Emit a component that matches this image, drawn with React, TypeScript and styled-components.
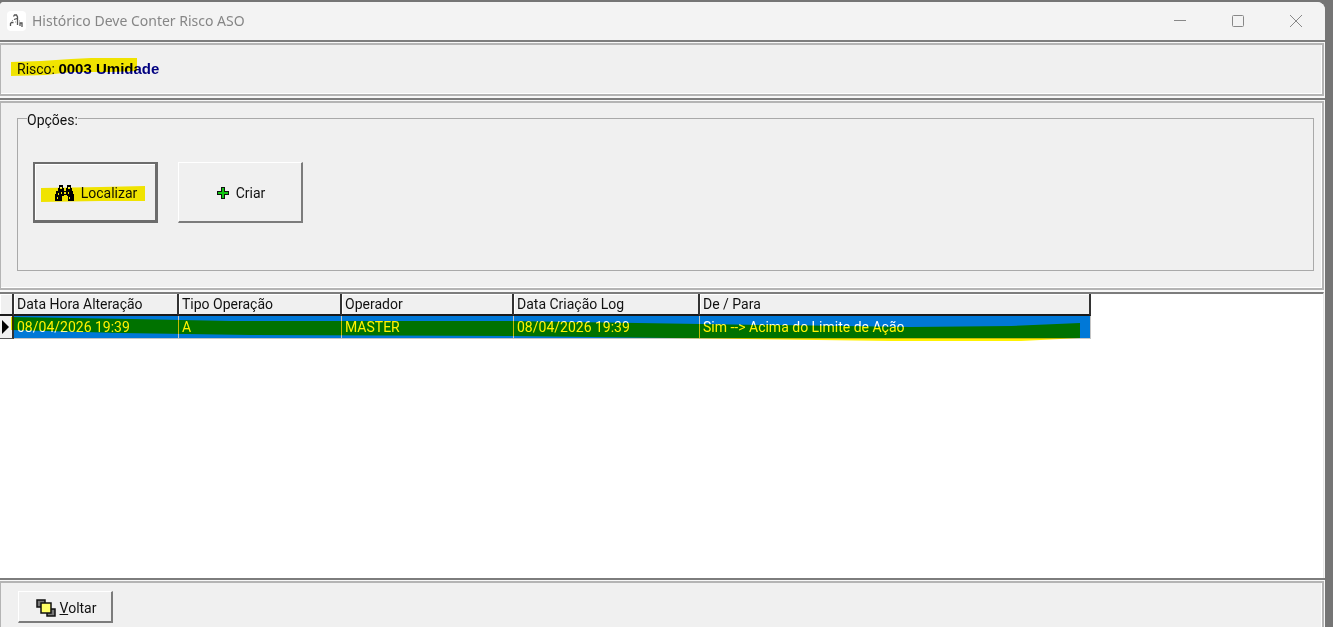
import React from "react";
import styled, { createGlobalStyle, css } from "styled-components";

const Global = createGlobalStyle`
  * { box-sizing: border-box; }
  body { margin: 0; background: #757575; color: #111; font: 14px/18px Roboto, Arial, sans-serif; }
  button { font: inherit; color: inherit; }
`;

const Desktop = styled.div`
  min-height: 100vh;
  display: flex;
  flex-direction: column;
  padding: 2px 8px 0 0;
  background: #757575;
`;
const Window = styled.div`
  flex: 1;
  display: flex;
  flex-direction: column;
  background: #f8f8f8;
  border-radius: 4px 8px 0 0;
  overflow: hidden;
`;
const TitleBar = styled.header`
  display: flex;
  align-items: center;
  height: 38px;
  padding-left: 7px;
  background: #f3f3f3;
`;
const Title = styled.h1`
  flex: 1;
  margin: 0 0 0 6px;
  font: 400 14px/20px "Noto Sans", "Open Sans", sans-serif;
  color: #868686;
`;
const WindowButton = styled.button`
  display: grid;
  place-items: center;
  width: 58px;
  height: 36px;
  padding: 0;
  border: 0;
  background: none;
`;
const Panel = styled.section<{ $height: number; $open?: boolean }>`
  height: ${(p) => p.$height}px;
  padding: 1px 1px ${(p) => (p.$open ? 0 : 2)}px 0;
  border-top: 2px solid #7d7d7d;
`;
const PanelFace = styled.div<{ $open?: boolean }>`
  display: flow-root;
  height: 100%;
  background: #f0f0f0;
  border: solid #b4b4b4;
  border-width: 2px 2px ${(p) => (p.$open ? 0 : 2)}px 1px;
  box-shadow: inset -1px ${(p) => (p.$open ? 0 : -1)}px #fff;
`;
const RiskLine = styled.p`
  position: relative;
  width: max-content;
  margin: 0;
  padding: 15px 0 0 16px;
`;
const RiskName = styled.strong`
  font: 700 15px/18px "Liberation Sans", Arial, sans-serif;
  color: #000080;
`;
const Marker = styled.svg<{ $x: number; $y: number }>`
  position: absolute;
  left: ${(p) => p.$x}px;
  top: ${(p) => p.$y}px;
  mix-blend-mode: multiply;
  pointer-events: none;
  fill: #fff200;
`;
const Options = styled.fieldset`
  height: 163px;
  margin: 5px 8px 0 16px;
  padding: 33px 15px 0;
  border: 1px solid #a9a9a9;
`;
const Legend = styled.legend`
  margin-left: -6px;
  padding: 3px 0 0;
`;
const ButtonRow = styled.div`
  display: flex;
  gap: 20px;
`;
const PushButton = styled.button<{ $w: number; $h: number; $gap: number; $focused?: boolean }>`
  position: relative;
  display: flex;
  align-items: center;
  justify-content: center;
  gap: ${(p) => p.$gap}px;
  width: ${(p) => p.$w}px;
  height: ${(p) => p.$h}px;
  padding: 2px 0 0 2px;
  background: #f0f0f0;
  border: solid;
  border-width: 1px 2px 2px 1px;
  border-color: #fff #7c7c7c #7c7c7c #fff;
  ${(p) => p.$focused && css`
    border-width: 2px 3px 3px 2px;
    border-color: #6c6c6c;
    box-shadow: inset 1px 1px #fff;
  `}
`;
const GridArea = styled.main`
  flex: 1;
  margin-right: 1px;
  background: #fff;
  border-top: 2px solid #7d7d7d;
  border-right: 1px solid #e8e8e8;
`;
const GridWrap = styled.div`
  position: relative;
  width: 1091px;
`;
const Table = styled.table`
  width: 100%;
  table-layout: fixed;
  border-collapse: separate;
  border-spacing: 0;
`;
const Th = styled.th<{ $w: number }>`
  width: ${(p) => p.$w}px;
  height: 22px;
  padding: 0 0 0 3px;
  text-align: left;
  font-weight: 400;
  white-space: nowrap;
  background: #f0f0f0;
  border-right: 2px solid #333;
  border-bottom: 2px solid #1a1a1a;
  box-shadow: inset 1px 1px #fff;
`;
const Td = styled.td`
  height: 23px;
  padding: 0 0 0 3px;
  color: #fff;
  white-space: nowrap;
  background: #0078d7;
  border-right: 1px solid #c5c5c5;
  border-bottom: 1px solid #c5c5c5;
`;
const RowMark = styled.td`
  padding: 0;
  background: #f0f0f0;
  border-right: 2px solid #333;
  border-bottom: 1px solid #555;
`;
const Arrow = styled.svg`
  display: block;
`;
const Footer = styled.footer`
  padding: 8px 0 0 17px;
`;

const columns: [string, number][] = [
  ["Data Hora Alteração", 165],
  ["Tipo Operação", 163],
  ["Operador", 172],
  ["Data Criação Log", 186],
  ["De / Para", 391],
];
const rows = [["08/04/2026 19:39", "A", "MASTER", "08/04/2026 19:39", "Sim --> Acima do Limite de Ação"]];

const AppIcon = () => (
  <svg width="19" height="20" viewBox="0 0 19 20" fill="none">
    <rect width="19" height="20" rx="4" fill="#fff" />
    <path d="M6.500 5.500l1-1.500h2l1 2v4M7 8.500l3-1M3.500 15v-2.500l1-1h2M10.500 10v4M13 15v-3h2v4" stroke="#555" strokeWidth="1.300" />
    <path d="M8 11h1M5 9.500h1M12 10h1" stroke="#999" />
  </svg>
);
const Binoculars = () => (
  <svg width="20" height="17" viewBox="0 0 20 17">
    <path d="M4 0h4v3h1v3h2V3h1V0h4v3h1v3h1v3h1v7h-6v-5h-1v-1H9v1H7v5H0V9h1V6h2V3h1z" fill="#000" />
    <path d="M5 2h2v2H5zM13 2h2v2h-2zM3 8h1v2H3zM6 7h1v2H6zM9 7h2v2H9zM13 7h1v2h-1zM2 12h1v2H2zM14 12h1v2h-1z" fill="#f0f0f0" />
  </svg>
);
const Plus = () => (
  <svg width="12" height="12" viewBox="0 0 12 12">
    <path d="M4 0h4v4h4v4H8v4H4V8H0V4h4z" fill="#111" />
    <path d="M5 1h2v4h4v2H7v4H5V7H1V5h4z" fill="#12c512" />
  </svg>
);
const Stack = () => (
  <svg width="20" height="18" viewBox="0 0 20 18" stroke="#111">
    <path d="M1 1h8v7H1zM11 10h8v7h-8z" fill="#777" strokeWidth="1.500" />
    <path d="M5 4h10v10H5z" fill="#ffff66" strokeWidth="1.500" />
  </svg>
);

export default function App() {
  return (
    <Desktop>
      <Global />
      <Window>
        <TitleBar>
          <AppIcon />
          <Title>Histórico Deve Conter Risco ASO</Title>
          <WindowButton aria-label="Minimizar">
            <svg width="12" height="12" stroke="#888"><path d="M0 5.500h12" /></svg>
          </WindowButton>
          <WindowButton aria-label="Maximizar">
            <svg width="12" height="12" fill="none" stroke="#888"><rect x=".5" y=".5" width="11" height="11" rx="1" /></svg>
          </WindowButton>
          <WindowButton aria-label="Fechar">
            <svg width="12" height="12" stroke="#888"><path d="M0 0l12 12M12 0L0 12" /></svg>
          </WindowButton>
        </TitleBar>
        <Panel $height={58}>
          <PanelFace>
            <RiskLine>
              Risco: <RiskName>0003 Umidade</RiskName>
              <Marker $x={10} $y={13} width="127" height="20"><path d="M0 4L30 3 60 1 80 0H126V13L100 14 60 14 35 17 0 18z" /></Marker>
            </RiskLine>
          </PanelFace>
        </Panel>
        <Panel $height={194}>
          <PanelFace>
            <Options>
              <Legend>Opções:</Legend>
              <ButtonRow>
                <PushButton $w={125} $h={61} $gap={6} $focused>
                  <Binoculars />
                  Localizar
                  <Marker $x={6} $y={22} width="105" height="18"><path d="M0 2L60 1 104 0V15L60 15 0 16z" /></Marker>
                </PushButton>
                <PushButton $w={125} $h={61} $gap={7}>
                  <Plus />
                  Criar
                </PushButton>
              </ButtonRow>
            </Options>
          </PanelFace>
        </Panel>
        <GridArea>
          <GridWrap>
            <Table>
              <thead>
                <tr>
                  <Th $w={14} aria-label="Registro atual" />
                  {columns.map(([name, w]) => <Th key={name} $w={w}>{name}</Th>)}
                </tr>
              </thead>
              <tbody>
                {rows.map((row, i) => (
                  <tr key={i}>
                    <RowMark><Arrow width="10" height="14"><path d="M2 0l7 7-7 7z" /></Arrow></RowMark>
                    {row.map((cell, j) => <Td key={j}>{cell}</Td>)}
                  </tr>
                ))}
              </tbody>
            </Table>
            <Marker $x={11} $y={22} width="1070" height="28">
              <path d="M0 1L120 3 220 5 500 5 690 8 900 11 1000 10 1069 7V22L1010 25 880 25 660 22 500 20 240 19 110 17 0 14z" />
            </Marker>
          </GridWrap>
        </GridArea>
        <Panel $height={49} $open>
          <PanelFace $open>
            <Footer>
              <PushButton $w={95} $h={32} $gap={4}>
                <Stack />
                <span><u>V</u>oltar</span>
              </PushButton>
            </Footer>
          </PanelFace>
        </Panel>
      </Window>
    </Desktop>
  );
}
